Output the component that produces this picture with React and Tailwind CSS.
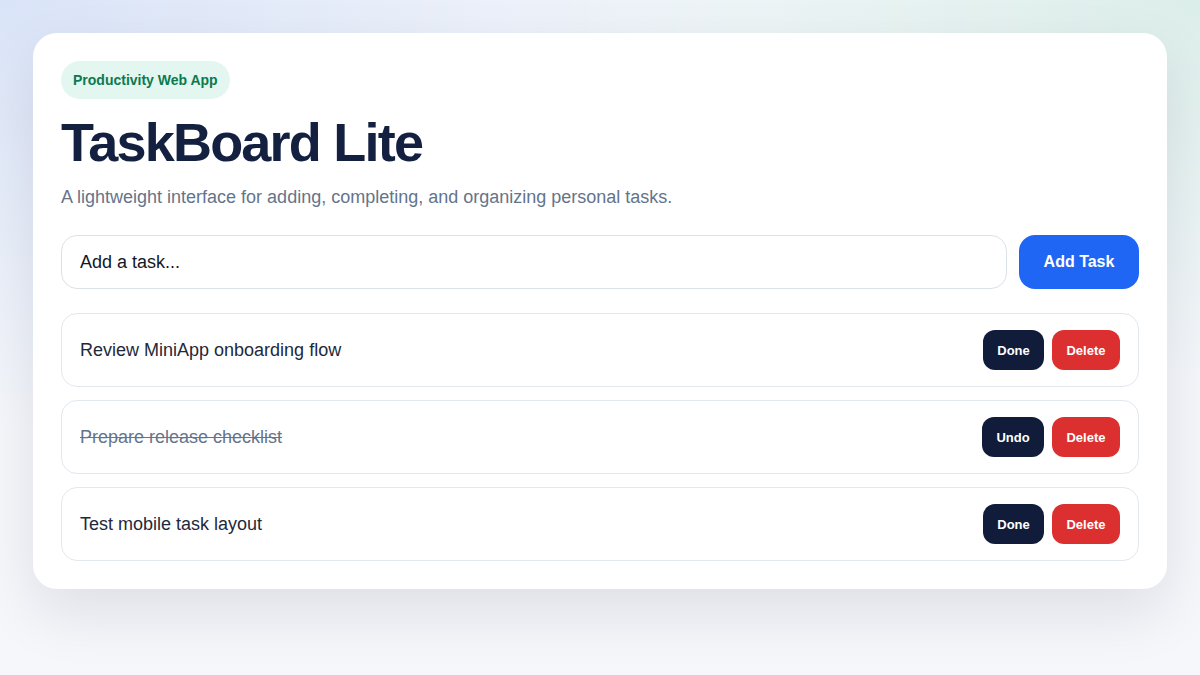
import React, { useState } from "react";

const initialTasks = [
  { id: 1, title: "Review MiniApp onboarding flow", done: false },
  { id: 2, title: "Prepare release checklist", done: true },
  { id: 3, title: "Test mobile task layout", done: false },
];

function TaskRow({ task, onToggle, onDelete }) {
  return (
    <li className="flex h-[74px] items-center justify-between rounded-2xl border border-[#e2e8f0] bg-white pl-[18px] pr-[18px]">
      <span
        className={
          task.done
            ? "text-[18px] text-[#64748b] line-through"
            : "text-[18px] text-[#1e293b]"
        }
      >
        {task.title}
      </span>
      <div className="flex items-center gap-2">
        <button
          onClick={onToggle}
          className={
            task.done
              ? "h-10 w-[62px] rounded-xl bg-[#111c3a] text-[13px] font-bold text-white"
              : "h-10 w-[61px] rounded-xl bg-[#111c3a] text-[13px] font-bold text-white"
          }
        >
          {task.done ? "Undo" : "Done"}
        </button>
        <button
          onClick={onDelete}
          className="h-10 w-[68px] rounded-xl bg-[#dc2f2f] text-[13px] font-bold text-white"
        >
          Delete
        </button>
      </div>
    </li>
  );
}

export default function App() {
  const [tasks, setTasks] = useState(initialTasks);
  const [draft, setDraft] = useState("Add a task...");

  const addTask = () => {
    const title = draft.trim();
    if (!title) return;
    setTasks([...tasks, { id: Date.now(), title, done: false }]);
    setDraft("");
  };

  return (
    <div
      className="min-h-[675px] bg-[#f5f7fb] bg-[image:radial-gradient(ellipse_at_0%_0%,#dae4f8_0%,rgba(245,247,251,0)_45%),radial-gradient(ellipse_at_100%_0%,#dceeea_0%,rgba(245,247,251,0)_40%)] p-[33px]"
      style={{ fontFamily: '"Liberation Sans", Arial, sans-serif' }}
    >
      <div className="rounded-[24px] border border-transparent bg-white p-[27px] shadow-[0_24px_60px_rgba(15,23,42,0.10)]">
        <span className="inline-flex h-[38px] items-center rounded-full bg-[#e3f6ef] px-3 text-[14px] font-bold text-[#0b7a50]">
          Productivity Web App
        </span>
        <h1 className="mt-[14px] text-[54px] leading-[1.1] font-bold tracking-[-0.033em] text-[#13203f]">
          TaskBoard Lite
        </h1>
        <p className="mt-[11px] text-[18px] leading-[28px] text-[#64748b]">
          A lightweight interface for adding, completing, and organizing personal tasks.
        </p>

        <div className="mt-6 flex gap-3">
          <input
            value={draft}
            onChange={(e) => setDraft(e.target.value)}
            className="h-[54px] flex-1 rounded-2xl border border-[#dbe1e8] px-[18px] text-[18px] text-[#111827] outline-none"
          />
          <button
            onClick={addTask}
            className="h-[54px] w-[120px] rounded-2xl bg-[#1f66f4] text-[16px] font-bold text-white"
          >
            Add Task
          </button>
        </div>

        <ul className="mt-6 flex flex-col gap-[13px]">
          {tasks.map((t) => (
            <TaskRow
              key={t.id}
              task={t}
              onToggle={() =>
                setTasks(tasks.map((x) => (x.id === t.id ? { ...x, done: !x.done } : x)))
              }
              onDelete={() => setTasks(tasks.filter((x) => x.id !== t.id))}
            />
          ))}
        </ul>
      </div>
    </div>
  );
}
